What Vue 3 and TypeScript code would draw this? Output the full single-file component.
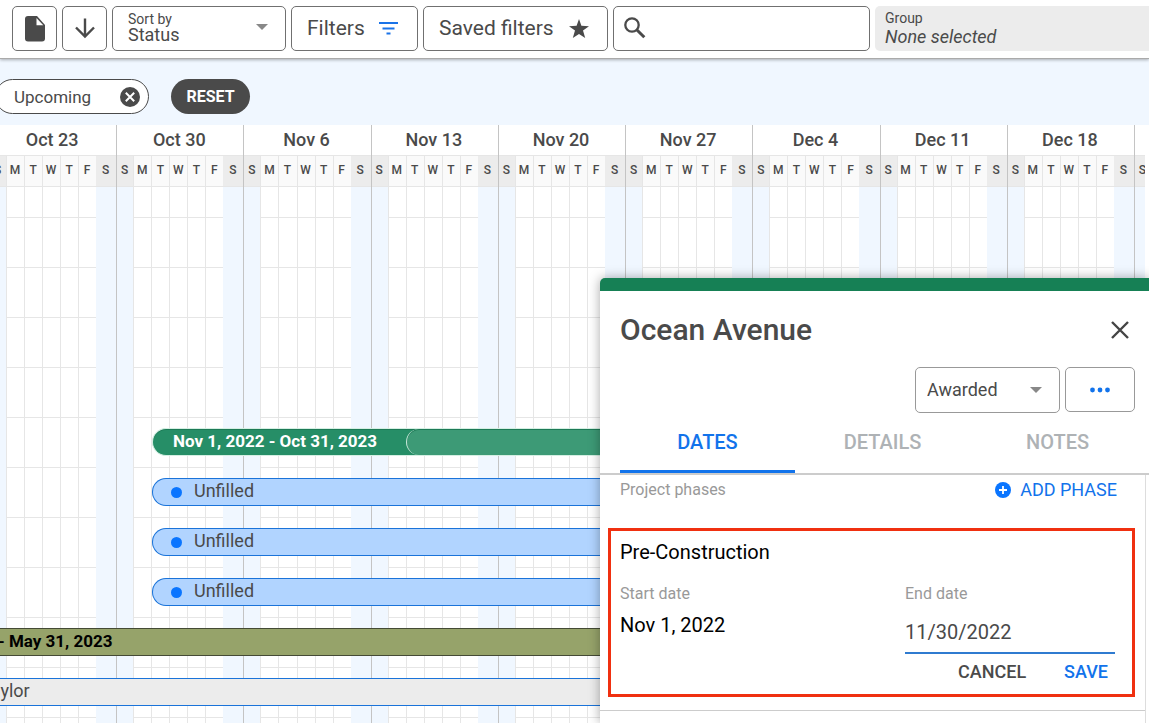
<script setup lang="ts">
import { ref } from 'vue'

interface Bar {
  kind: 'empty' | 'project' | 'unfilled' | 'olive' | 'person'
  label: string
}

const weeks: string[] = ['Oct 23', 'Oct 30', 'Nov 6', 'Nov 13', 'Nov 20', 'Nov 27', 'Dec 4', 'Dec 11', 'Dec 18']
const days: string[] = ['S', 'M', 'T', 'W', 'T', 'F', 'S']
const bars: Bar[] = [
  { kind: 'empty', label: '' },
  { kind: 'empty', label: '' },
  { kind: 'empty', label: '' },
  { kind: 'empty', label: '' },
  { kind: 'project', label: 'Nov 1, 2022 - Oct 31, 2023' },
  { kind: 'unfilled', label: 'Unfilled' },
  { kind: 'unfilled', label: 'Unfilled' },
  { kind: 'unfilled', label: 'Unfilled' },
  { kind: 'olive', label: '- May 31, 2023' },
  { kind: 'person', label: 'Taylor' },
]
const tabs: string[] = ['DATES', 'DETAILS', 'NOTES']

const activeTab = ref('DATES')
const sortBy = ref('Status')
const status = ref('Awarded')
const search = ref('')
const endDate = ref('11/30/2022')

const isWeekend = (index: number): boolean => index === 0 || index === 6
</script>

<template>
  <div class="app">
    <header class="toolbar">
      <button class="box icon-btn" type="button" aria-label="Document">
        <svg width="20" height="26" viewBox="0 0 20 26">
          <path d="M3 0H12L20 9V22.500Q20 25.500 17 25.500H3Q0 25.500 0 22.500V3Q0 0 3 0Z" fill="#4a4a4a" />
          <path d="M11.500 2V9.200H18.300Z" fill="#fff" />
        </svg>
      </button>
      <button class="box icon-btn" type="button" aria-label="Sort direction">
        <svg width="22" height="22" viewBox="0 0 22 22" fill="none" stroke="#4a4a4a" stroke-width="2.400">
          <path d="M11 0.500V18M2 9.500L11 18.500L20 9.500" />
        </svg>
      </button>
      <div class="box sort">
        <label for="sort">Sort by</label>
        <select id="sort" v-model="sortBy">
          <option>Status</option>
          <option>Name</option>
        </select>
        <svg class="caret" width="12" height="6" viewBox="0 0 12 6"><path d="M0 0H12L6 6Z" fill="#888" /></svg>
      </div>
      <button class="box text-btn filters" type="button">
        Filters
        <svg width="20" height="14" viewBox="0 0 20 14" stroke="#1a73e8" stroke-width="2.200">
          <path d="M0 2H19M3.500 7.500H15.500M7.500 12.500H11.500" />
        </svg>
      </button>
      <button class="box text-btn saved" type="button">
        Saved filters
        <svg width="20" height="19" viewBox="0 0 20 19">
          <path d="M10 0L12.400 6.700L20 7.200L14 11.600L16.200 19L10 14.900L3.800 19L6 11.600L0 7.200L7.600 6.700Z" fill="#4a4a4a" />
        </svg>
      </button>
      <div class="box search">
        <svg width="22" height="22" viewBox="0 0 22 22" fill="none" stroke="#4a4a4a">
          <circle cx="8" cy="8" r="6.700" stroke-width="2.300" />
          <path d="M13 13L20.300 20.300" stroke-width="3" />
        </svg>
        <input v-model="search" type="text" aria-label="Search" />
      </div>
      <button class="group" type="button">
        <span class="group-label">Group</span>
        <em>None selected</em>
      </button>
    </header>

    <div class="chips">
      <button class="chip" type="button">
        Upcoming
        <svg width="20" height="20" viewBox="0 0 20 20">
          <circle cx="10" cy="10" r="10" fill="#4a4a4a" />
          <path d="M5.800 5.800L14.200 14.200M14.200 5.800L5.800 14.200" stroke="#fff" stroke-width="2" />
        </svg>
      </button>
      <button class="reset" type="button">RESET</button>
    </div>

    <main class="calendar">
      <div class="weeks">
        <section v-for="week in weeks" :key="week" class="week">
          <h2>{{ week }}</h2>
          <div class="days">
            <div v-for="(day, i) in days" :key="i" class="day" :class="{ weekend: isWeekend(i) }">
              <span>{{ day }}</span>
            </div>
          </div>
        </section>
        <section class="week last">
          <h2></h2>
          <div class="days">
            <div class="day weekend"><span>S</span></div>
          </div>
        </section>
      </div>
      <div class="rows">
        <div v-for="(bar, i) in bars" :key="i" class="row">
          <div v-if="bar.kind !== 'empty'" class="bar" :class="bar.kind">
            <i v-if="bar.kind === 'unfilled'" class="dot"></i>
            <span>{{ bar.label }}</span>
            <div v-if="bar.kind === 'project'" class="phase"></div>
          </div>
        </div>
      </div>
    </main>

    <aside class="panel">
      <div class="panel-head">
        <h1>Ocean Avenue</h1>
        <button class="close" type="button" aria-label="Close">
          <svg width="18" height="18" viewBox="0 0 18 18" stroke="#444" stroke-width="2.400">
            <path d="M1 1L17 17M17 1L1 17" />
          </svg>
        </button>
      </div>
      <div class="actions">
        <div class="status">
          <select v-model="status" aria-label="Status">
            <option>Awarded</option>
            <option>Pending</option>
          </select>
          <svg class="caret" width="12" height="6" viewBox="0 0 12 6"><path d="M0 0H12L6 6Z" fill="#888" /></svg>
        </div>
        <button class="more" type="button" aria-label="More options">
          <svg width="20" height="6" viewBox="0 0 20 6" fill="#1273eb">
            <circle cx="2.500" cy="3" r="2.400" /><circle cx="10" cy="3" r="2.400" /><circle cx="17.500" cy="3" r="2.400" />
          </svg>
        </button>
      </div>
      <nav class="tabs" role="tablist">
        <button
          v-for="tab in tabs"
          :key="tab"
          type="button"
          role="tab"
          :aria-selected="activeTab === tab"
          :class="{ active: activeTab === tab }"
          @click="activeTab = tab"
        >{{ tab }}</button>
      </nav>
      <div class="content">
        <div class="phases-head">
          <span class="muted">Project phases</span>
          <button class="add" type="button">
            <svg width="16" height="16" viewBox="0 0 16 16">
              <circle cx="8" cy="8" r="8" fill="#0a75ff" />
              <path d="M8 4V12M4 8H12" stroke="#fff" stroke-width="1.800" />
            </svg>
            ADD PHASE
          </button>
        </div>
        <form class="phase-form" @submit.prevent>
          <h3>Pre-Construction</h3>
          <div class="fields">
            <div class="field">
              <span class="muted">Start date</span>
              <p>Nov 1, 2022</p>
            </div>
            <div class="field end">
              <label class="muted" for="end-date">End date</label>
              <input id="end-date" v-model="endDate" type="text" />
            </div>
          </div>
          <div class="form-actions">
            <button type="button">CANCEL</button>
            <button class="save" type="submit">SAVE</button>
          </div>
        </form>
      </div>
    </aside>
  </div>
</template>

<style>
body {
  margin: 0;
}
</style>

<style scoped>
.app {
  position: relative;
  display: flex;
  flex-direction: column;
  height: 100vh;
  overflow: hidden;
  background: #f0f7ff;
  color: #4a4a4a;
  font-family: Roboto, "Liberation Sans", sans-serif;
}
.app * {
  box-sizing: border-box;
}
h1, h2, h3, p {
  margin: 0;
}
button, select, input {
  font-family: inherit;
  color: inherit;
  margin: 0;
  padding: 0;
  border: 0;
  background: none;
  outline: none;
  appearance: none;
}
svg {
  display: block;
  flex: none;
}
.toolbar {
  display: flex;
  align-items: flex-start;
  gap: 5px;
  height: 59px;
  flex: none;
  padding: 6px 0 0 12px;
  background: #fff;
  border-bottom: 1px solid #aaa;
  box-shadow: 0 1px 3px rgba(0, 0, 0, 0.3);
}
.box {
  height: 45px;
  flex: none;
  border: 1px solid #707070;
  border-radius: 5px;
  background: #fff;
}
.icon-btn {
  width: 45px;
  display: flex;
  align-items: center;
  justify-content: center;
}
.sort {
  display: grid;
  grid-template-columns: 1fr 12px;
  grid-template-rows: 16px 16px;
  align-items: center;
  align-content: center;
  width: 174px;
  padding: 0 17px 3px 15px;
}
.sort label {
  font-size: 14px;
  line-height: 16px;
}
.sort select {
  grid-area: 2 / 1;
  font-size: 18px;
  line-height: 18px;
  height: 18px;
}
.sort .caret {
  grid-area: 1 / 2 / 3 / 3;
}
.text-btn {
  display: flex;
  align-items: center;
  justify-content: space-between;
  font-size: 21px;
}
.filters {
  width: 127px;
  padding: 0 18px 1px 15px;
}
.saved {
  width: 185px;
  padding: 0 18px 1px 15px;
}
.search {
  display: flex;
  align-items: center;
  gap: 10px;
  width: 257px;
  padding: 0 10px 2px;
}
.search input {
  flex: 1;
  min-width: 0;
  font-size: 18px;
}
.group {
  flex: 1;
  height: 45px;
  padding: 0 10px 2px;
  border-radius: 5px 0 0 5px;
  background: #ececec;
  text-align: left;
}
.group-label, .group em {
  display: block;
}
.group-label {
  font-size: 14px;
  line-height: 18px;
}
.group em {
  font-size: 18px;
  line-height: 20px;
}
.chips {
  display: flex;
  flex: none;
  align-items: center;
  gap: 22px;
  height: 66px;
  padding: 9px 0 0;
}
.chip {
  display: flex;
  align-items: center;
  justify-content: space-between;
  width: 154px;
  height: 35px;
  margin-left: -5px;
  padding: 0 8px 0 18px;
  border: 1px solid #4a4a4a;
  border-radius: 18px;
  background: #fff;
  font-size: 17px;
}
.reset {
  width: 79px;
  height: 35px;
  border-radius: 18px;
  background: #4a4a4a;
  color: #fff;
  font-size: 16px;
  font-weight: 700;
}
.calendar {
  display: grid;
  flex: 1;
  min-height: 0;
  grid-template-rows: 100%;
  grid-template-columns: 100%;
  background: #fff;
  overflow: hidden;
}
.weeks {
  grid-area: 1 / 1;
  display: flex;
  margin-left: -11px;
  margin-right: 4px;
}
.week {
  display: flex;
  flex: 1 1 0;
  min-width: 0;
  flex-direction: column;
  border-left: 1px solid #c4c4c4;
}
.week.last {
  flex: 0 0 11px;
  overflow: hidden;
}
.week h2 {
  height: 30px;
  flex: none;
  padding-right: 2px;
  font-size: 18px;
  font-weight: 500;
  line-height: 30px;
  text-align: center;
}
.days {
  display: grid;
  grid-template-columns: 16fr repeat(5, 18fr) 20fr;
  flex: 1;
}
.last .days {
  grid-template-columns: 16px;
}
.day {
  display: flex;
  flex-direction: column;
  border-left: 1px solid #e6e6e6;
  background: linear-gradient(#e6e6e6 1px, transparent 1px) 0 12px / 100% 50px;
}
.day span {
  height: 32px;
  padding-right: 1px;
  border-top: 1px solid #e6e6e6;
  border-bottom: 1px solid #e6e6e6;
  background: #fafafa;
  font-size: 12px;
  font-weight: 500;
  line-height: 28px;
  text-align: center;
}
.day.weekend {
  border-left-color: transparent;
  background: #f0f7ff;
}
.weekend span {
  margin-left: -1px;
  background: #ececec;
}
.rows {
  grid-area: 1 / 1;
  z-index: 1;
  padding-top: 92px;
}
.row {
  display: flex;
  align-items: center;
  height: 50px;
}
.bar {
  display: flex;
  flex: 1;
  align-items: center;
  height: 28px;
  border: 1px solid #1a73d9;
  font-size: 18px;
  white-space: nowrap;
}
.bar span {
  line-height: 24px;
  padding-bottom: 2px;
}
.project, .unfilled {
  margin-left: 152px;
  border-right: 0;
  border-radius: 14px 0 0 14px;
}
.project {
  padding-left: 20px;
  border-color: #d5efe3;
  background: #268e67;
  box-shadow: inset 0 1px #1d7a56;
  color: #fff;
  font-size: 17px;
  font-weight: 700;
}
.phase {
  flex: 1;
  height: 26px;
  margin-left: 29px;
  border: 1px solid #c9e8da;
  border-width: 0 0 0 1px;
  border-radius: 14px 0 0 14px;
  background: #3d9a76;
  box-shadow: inset 0 1px #1d7a56;
}
.unfilled {
  gap: 12px;
  padding-left: 18px;
  background: #b1d4ff;
}
.dot {
  width: 11px;
  height: 11px;
  border-radius: 50%;
  background: #0a75ff;
}
.olive {
  margin-left: -3px;
  border-color: #444a35;
  background: #96a36a;
  color: #000;
  font-size: 17px;
  font-weight: 700;
}
.person {
  margin-left: -20px;
  background: #ececec;
}
.panel {
  position: absolute;
  z-index: 2;
  top: 278px;
  right: 0;
  bottom: 0;
  width: 549px;
  display: flex;
  flex-direction: column;
  border-top: 13px solid #168055;
  border-radius: 5px 0 0 0;
  background: #fff;
  box-shadow: 0 0 12px rgba(0, 0, 0, 0.35);
}
.panel-head {
  display: flex;
  flex: none;
  align-items: center;
  justify-content: space-between;
  height: 76px;
  padding: 2px 20px 0;
}
h1 {
  font-size: 30px;
  font-weight: 500;
  line-height: 36px;
}
.close {
  height: 18px;
}
.actions {
  display: flex;
  flex: none;
  justify-content: flex-end;
  gap: 5px;
  padding-right: 14px;
}
.status {
  display: grid;
  align-items: center;
  width: 145px;
  height: 46px;
  border: 1px solid #999;
  border-radius: 5px;
}
.status select {
  grid-area: 1 / 1;
  height: 44px;
  padding: 0 0 2px 11px;
  font-size: 18px;
}
.status .caret {
  grid-area: 1 / 1;
  justify-self: end;
  margin-right: 17px;
  pointer-events: none;
}
.more {
  display: flex;
  align-items: center;
  justify-content: center;
  width: 70px;
  height: 45px;
  border: 1px solid #999;
  border-radius: 5px;
}
.tabs {
  display: flex;
  flex: none;
  height: 62px;
  padding: 0 4px 0 20px;
  border-bottom: 2px solid #ccc;
}
.tabs button {
  flex: 1;
  padding-top: 1px;
  border-bottom: 3px solid transparent;
  color: #aeb2b5;
  font-size: 20px;
  font-weight: 500;
}
.tabs .active {
  border-color: #1273eb;
  color: #1273eb;
}
.content {
  flex: 1;
  margin-right: 3px;
  border-right: 1px solid #ddd;
}
.phases-head {
  display: flex;
  align-items: center;
  justify-content: space-between;
  height: 30px;
  padding: 0 28px 0 20px;
}
.muted {
  color: #999;
  font-size: 16px;
  line-height: 20px;
}
.add {
  display: flex;
  align-items: center;
  gap: 9px;
  color: #1273eb;
  font-size: 18px;
  line-height: 20px;
}
.phase-form {
  height: 169px;
  margin: 23px 10px 13px 8px;
  padding: 9px 17px 0 9px;
  border: 3px solid #f03010;
}
.content::after {
  content: "";
  display: block;
  border-top: 1px solid #ccc;
}
h3 {
  color: #000;
  font-size: 20px;
  font-weight: 400;
  line-height: 24px;
}
.fields {
  display: flex;
  justify-content: space-between;
  margin-top: 20px;
}
.field {
  display: flex;
  flex-direction: column;
}
.field p {
  margin-top: 9px;
  color: #000;
  font-size: 20px;
  line-height: 24px;
}
.end {
  width: 210px;
}
.end input {
  width: 100%;
  height: 40px;
  margin-top: 10px;
  padding-bottom: 2px;
  border-bottom: 2px solid #2f7bd0;
  font-size: 20px;
}
.form-actions {
  display: flex;
  justify-content: flex-end;
  gap: 38px;
  padding: 7px 7px 0 0;
}
.form-actions button {
  font-size: 18px;
  font-weight: 500;
  line-height: 22px;
}
.form-actions .save {
  color: #1273eb;
}
</style>
